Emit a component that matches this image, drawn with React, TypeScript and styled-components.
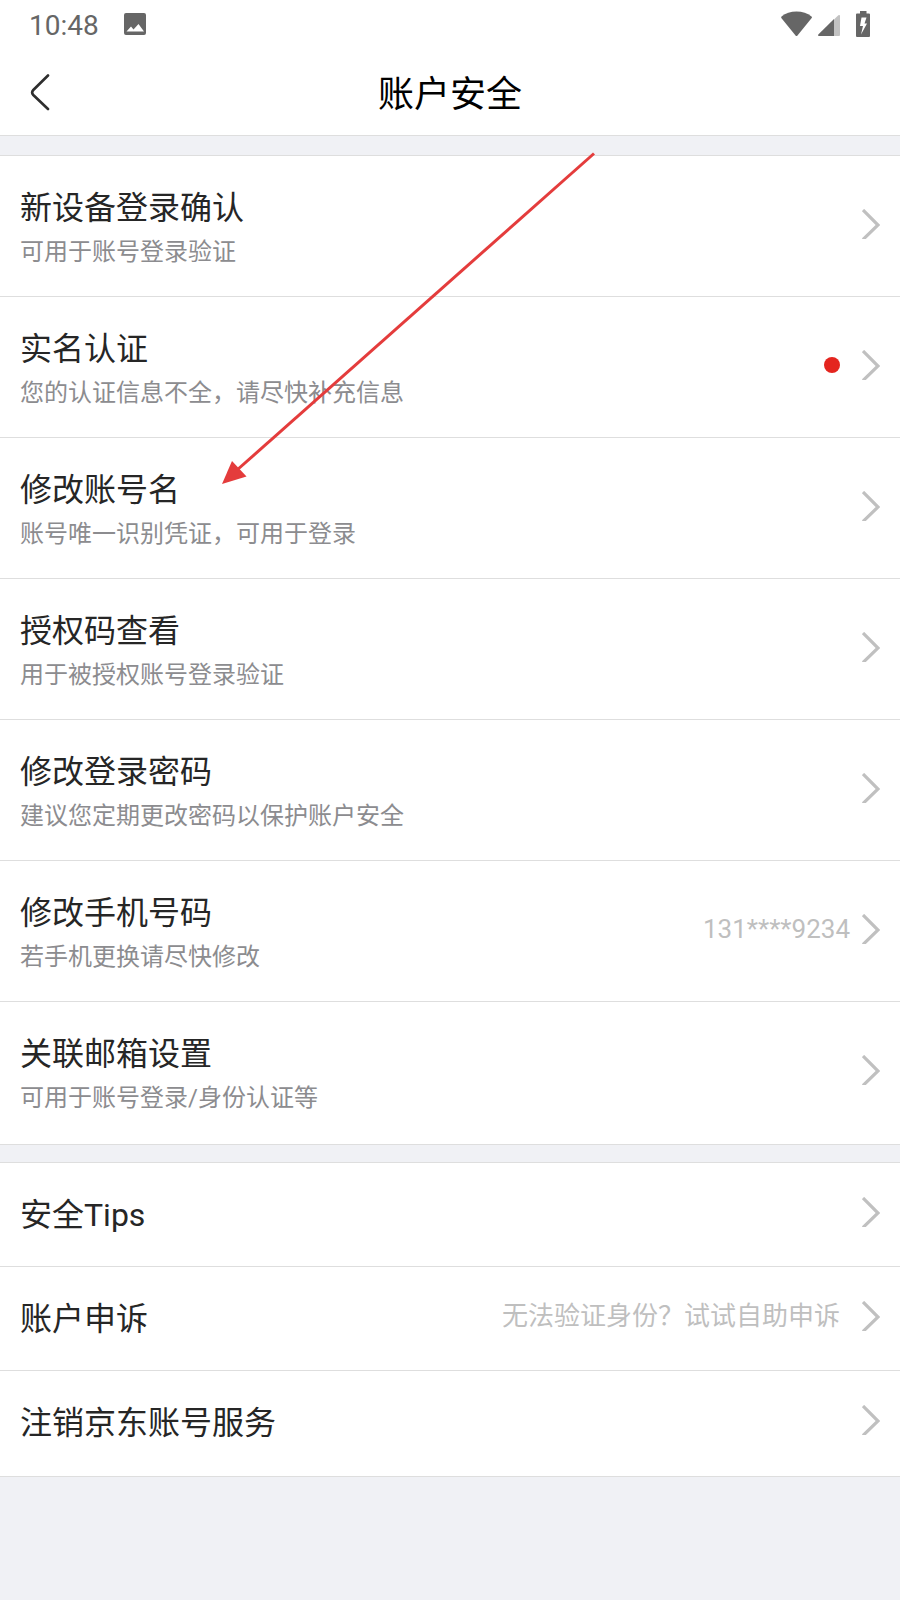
import React from "react";
import styled, { createGlobalStyle } from "styled-components";

const GlobalStyle = createGlobalStyle`
  *, *::before, *::after { box-sizing: border-box; }
  body {
    margin: 0;
    background: #f0f1f5;
    color: #262626;
    font-family: Roboto, "Noto Sans CJK SC", sans-serif;
  }
`;

const Page = styled.div`
  position: relative;
  min-height: 100vh;
  overflow-x: hidden;
`;

const TopBar = styled.header`
  background: #fff;
  border-bottom: 1px solid #dedede;
`;

const StatusBar = styled.div`
  display: flex;
  align-items: center;
  justify-content: space-between;
  height: 48px;
  padding: 0 30px 0 29px;
  color: #666;
`;

const StatusGroup = styled.div<{ $gap: number }>`
  display: flex;
  align-items: center;
  gap: ${(p) => p.$gap}px;
`;

const Clock = styled.time`
  font-size: 28px;
  line-height: 32px;
  padding-top: 4px;
`;

const NavBar = styled.div`
  display: grid;
  grid-template-columns: 80px 1fr 80px;
  align-items: center;
  height: 87px;
`;

const BackButton = styled.button`
  display: flex;
  align-items: center;
  height: 87px;
  padding: 0 0 0 30px;
  border: 0;
  background: none;
  color: #2e2e2e;
  cursor: pointer;
`;

const PageTitle = styled.h1`
  margin: 0;
  padding-top: 6px;
  color: #000;
  font-size: 36px;
  font-weight: 400;
  line-height: 48px;
  text-align: center;
`;

const Group = styled.ul<{ $gap: number }>`
  margin: ${(p) => p.$gap}px 0 0;
  padding: 0 0 2px;
  list-style: none;
  background: #fff;
  border: solid #dedede;
  border-width: 1px 0;
`;

const Item = styled.li`
  & + & {
    border-top: 1px solid #dedede;
  }
`;

const RowLink = styled.a<{ $tall: boolean }>`
  display: flex;
  align-items: center;
  justify-content: space-between;
  min-height: ${(p) => (p.$tall ? 140 : 103)}px;
  padding: 0 20px;
  color: inherit;
  text-decoration: none;
`;

const Labels = styled.span<{ $tall: boolean }>`
  display: flex;
  flex-direction: column;
  gap: 4px;
  padding-top: ${(p) => (p.$tall ? 4 : 0)}px;
`;

const Name = styled.span`
  font-size: 32px;
  line-height: 44px;
`;

const Hint = styled.span`
  color: #8c8c8f;
  font-size: 24px;
  line-height: 36px;
`;

const Trailing = styled.span<{ $gap: number; $tall: boolean }>`
  display: flex;
  align-items: center;
  gap: ${(p) => p.$gap}px;
  padding-bottom: ${(p) => (p.$tall ? 4 : 5)}px;
`;

const Value = styled.span`
  color: #bfbfbf;
  font-size: 26px;
  line-height: 32px;
`;

const Dot = styled.span`
  width: 16px;
  height: 16px;
  border-radius: 50%;
  background: #e4251f;
`;

const Pointer = styled.svg`
  position: absolute;
  top: 150px;
  left: 220px;
  pointer-events: none;
`;

const PhotoIcon = () => (
  <svg width="24" height="24" viewBox="0 0 24 24" aria-hidden="true">
    <path
      fill="currentColor"
      fillRule="evenodd"
      d="M3 1h18a2 2 0 0 1 2 2v18a2 2 0 0 1-2 2H3a2 2 0 0 1-2-2V3a2 2 0 0 1 2-2ZM3.500 19.500h17.500L15.500 12l-5 5.500-2.500-3Z"
    />
  </svg>
);

const WifiIcon = () => (
  <svg width="31" height="26" viewBox="0 0 31 26" aria-hidden="true">
    <path fill="currentColor" d="M0.500 5.500C4.500 2.300 9.700 .500 15.500 .500s11 1.800 15 5c.6.500.6 1 .2 1.500L16.500 24.500q-1 1-2 0L.3 7Q0 6.200.5 5.500Z" />
  </svg>
);

const SignalIcon = () => (
  <svg width="22" height="26" viewBox="0 0 22 26" aria-hidden="true">
    <path fill="#c2c2c2" d="M16 8.500l4.300-4.200q1.700-1 1.700.7v19q0 1-1 1h-5Z" />
    <path fill="currentColor" d="M16 8v17H1q-1.500 0-.7-1.500Z" />
  </svg>
);

const BatteryIcon = () => (
  <svg width="14" height="26" viewBox="0 0 14 26" aria-hidden="true">
    <path
      fill="currentColor"
      fillRule="evenodd"
      d="M4 0h6.500v2.500H13a1 1 0 0 1 1 1V25a1 1 0 0 1-1 1H1a1 1 0 0 1-1-1V3.500a1 1 0 0 1 1-1h3ZM5.500 6.500 4 15h3L5 23.500 11 12.500H8.500l2-6Z"
    />
  </svg>
);

const BackIcon = () => (
  <svg width="20" height="38" viewBox="0 0 20 38" fill="none" aria-hidden="true">
    <path d="M18 2.500 3.300 17q-2.300 2.500 0 5L18 36" stroke="currentColor" strokeWidth="2.600" strokeLinecap="round" />
  </svg>
);

const Chevron = () => (
  <svg width="18" height="30" viewBox="0 0 18 30" fill="none" aria-hidden="true">
    <path d="M1 1 16 16 1 30.500" stroke="#c0c0c0" strokeWidth="3.200" />
  </svg>
);

type Entry = { name: string; hint?: string; value?: string; valueGap?: number; alert?: boolean };

const accountEntries: Entry[] = [
  { name: "新设备登录确认", hint: "可用于账号登录验证" },
  { name: "实名认证", hint: "您的认证信息不全，请尽快补充信息", alert: true },
  { name: "修改账号名", hint: "账号唯一识别凭证，可用于登录" },
  { name: "授权码查看", hint: "用于被授权账号登录验证" },
  { name: "修改登录密码", hint: "建议您定期更改密码以保护账户安全" },
  { name: "修改手机号码", hint: "若手机更换请尽快修改", value: "131****9234", valueGap: 12 },
  { name: "关联邮箱设置", hint: "可用于账号登录/身份认证等" },
];

const serviceEntries: Entry[] = [
  { name: "安全Tips" },
  { name: "账户申诉", value: "无法验证身份？试试自助申诉" },
  { name: "注销京东账号服务" },
];

const EntryGroup = ({ entries, gap }: { entries: Entry[]; gap: number }) => (
  <Group $gap={gap}>
    {entries.map((e) => (
      <Item key={e.name}>
        <RowLink href="#" $tall={Boolean(e.hint)}>
          <Labels $tall={Boolean(e.hint)}>
            <Name>{e.name}</Name>
            {e.hint && <Hint>{e.hint}</Hint>}
          </Labels>
          <Trailing $gap={e.valueGap ?? 22} $tall={Boolean(e.hint)}>
            {e.value && <Value>{e.value}</Value>}
            {e.alert && <Dot />}
            <Chevron />
          </Trailing>
        </RowLink>
      </Item>
    ))}
  </Group>
);

export default function App() {
  return (
    <Page>
      <GlobalStyle />
      <TopBar>
        <StatusBar>
          <StatusGroup $gap={24}>
            <Clock>10:48</Clock>
            <PhotoIcon />
          </StatusGroup>
          <StatusGroup $gap={16}>
            <StatusGroup $gap={6}>
              <WifiIcon />
              <SignalIcon />
            </StatusGroup>
            <BatteryIcon />
          </StatusGroup>
        </StatusBar>
        <NavBar>
          <BackButton type="button" aria-label="返回">
            <BackIcon />
          </BackButton>
          <PageTitle>账户安全</PageTitle>
        </NavBar>
      </TopBar>
      <main>
        <EntryGroup entries={accountEntries} gap={19} />
        <EntryGroup entries={serviceEntries} gap={17} />
      </main>
      <Pointer width="378" height="338" viewBox="0 0 378 338" aria-hidden="true">
        <path d="M374 3.500 17 320" stroke="#e43c3c" strokeWidth="3" />
        <path d="M2 334 12 311 26.500 326.500Z" fill="#e43c3c" />
      </Pointer>
    </Page>
  );
}
